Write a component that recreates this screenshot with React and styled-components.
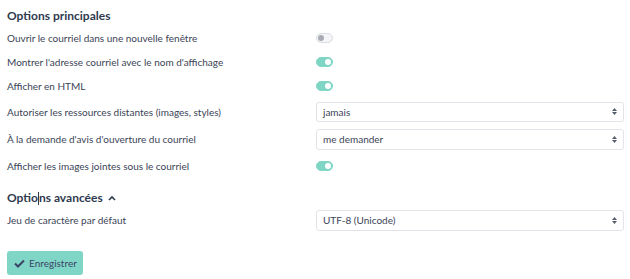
import React, { useState } from 'react';
import styled, { createGlobalStyle } from 'styled-components';

const GlobalStyle = createGlobalStyle`
  html, body {
    margin: 0;
    padding: 0;
    background: #ffffff;
  }
  body {
    font-family: Lato, "Liberation Sans", sans-serif;
    color: #3a4356;
  }
`;

const Page = styled.div`
  width: 630px;
  padding: 8px 6px 0 7px;
  box-sizing: border-box;
`;

const SectionTitle = styled.h2`
  margin: ${p => p.$top || 0}px 0 2px;
  font-size: 12px;
  font-weight: 700;
  line-height: 16px;
  color: #2f3a4f;
  display: flex;
  align-items: center;
  gap: 5px;
`;

const Caret = styled.span`
  display: inline-block;
  width: 0;
  height: 13px;
  border-left: 1px solid #2f3a4f;
  vertical-align: middle;
  margin-top: -1px;
`;

const Row = styled.div`
  display: grid;
  grid-template-columns: 309px 1fr;
  align-items: center;
  height: ${p => p.$h || 24}px;
`;

const Label = styled.label`
  font-size: 10px;
  color: #3a4356;
`;

const Track = styled.button`
  display: block;
  width: 17px;
  height: 10px;
  border-radius: 5px;
  border: 1px solid ${p => (p.$on ? '#7fd6c4' : '#dcdde2')};
  background: ${p => (p.$on ? '#7fd6c4' : '#f4f5f7')};
  padding: 0;
  position: relative;
  cursor: pointer;
  box-sizing: border-box;

  &::after {
    content: '';
    position: absolute;
    top: 1px;
    left: ${p => (p.$on ? '8px' : '1px')};
    width: 6px;
    height: 6px;
    border-radius: 50%;
    background: ${p => (p.$on ? '#ffffff' : '#a8abb3')};
  }
`;

const SelectBox = styled.div`
  height: ${p => p.$h || 20}px;
  border: 1px solid #e2e4e9;
  border-radius: 3px;
  display: flex;
  align-items: center;
  justify-content: space-between;
  padding: 0 6px;
  font-size: 10px;
  color: #3a4356;
  background: #fff;
  box-sizing: border-box;
  width: 308px;
`;

const Arrows = () => (
  <svg width="5" height="7" viewBox="0 0 5 7">
    <path d="M0 3 L2.5 0 L5 3 Z" fill="#555c6b" />
    <path d="M0 4 L2.5 7 L5 4 Z" fill="#555c6b" />
  </svg>
);

const Chevron = () => (
  <svg width="8" height="6" viewBox="0 0 8 6">
    <path d="M1 5 L4 2 L7 5" fill="none" stroke="#2f3a4f" strokeWidth="1.6" />
  </svg>
);

const SaveButton = styled.button`
  margin-top: 19px;
  display: inline-flex;
  align-items: center;
  gap: 4px;
  height: 24px;
  padding: 0 6px 0 7px;
  border: none;
  border-radius: 3px;
  background: #80d6c6;
  color: #3a4466;
  font-family: Lato, "Liberation Sans", sans-serif;
  font-size: 10px;
  cursor: pointer;
`;

const Toggle = ({ initial }) => {
  const [on, setOn] = useState(initial);
  return <Track $on={on} onClick={() => setOn(v => !v)} />;
};

const Select = ({ value, h }) => (
  <SelectBox $h={h}>
    <span>{value}</span>
    <Arrows />
  </SelectBox>
);

export default function App() {
  return (
    <Page>
      <GlobalStyle />
      <SectionTitle>Options principales</SectionTitle>
      <Row>
        <Label>Ouvrir le courriel dans une nouvelle fenêtre</Label>
        <Toggle initial={false} />
      </Row>
      <Row>
        <Label>Montrer l'adresse courriel avec le nom d'affichage</Label>
        <Toggle initial={true} />
      </Row>
      <Row>
        <Label>Afficher en HTML</Label>
        <Toggle initial={true} />
      </Row>
      <Row $h={27}>
        <Label>Autoriser les ressources distantes (images, styles)</Label>
        <Select value="jamais" />
      </Row>
      <Row $h={28}>
        <Label>À la demande d'avis d'ouverture du courriel</Label>
        <Select value="me demander" h={21} />
      </Row>
      <Row $h={26}>
        <Label>Afficher les images jointes sous le courriel</Label>
        <Toggle initial={true} />
      </Row>
      <SectionTitle $top={11}>
        <span>Optio<Caret />ns avancées</span>
        <Chevron />
      </SectionTitle>
      <Row $h={24}>
        <Label>Jeu de caractère par défaut</Label>
        <Select value="UTF-8 (Unicode)" h={21} />
      </Row>
      <SaveButton>
        <svg width="11" height="9" viewBox="0 0 11 9">
          <path d="M1 4.5 L4 7.5 L10 1.5" fill="none" stroke="#3a4466" strokeWidth="2" />
        </svg>
        Enregistrer
      </SaveButton>
    </Page>
  );
}
